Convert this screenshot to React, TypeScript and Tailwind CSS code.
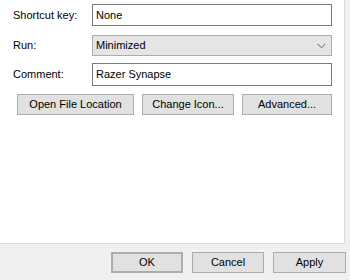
const font = "font-['Liberation_Sans',Arial,sans-serif] text-[11px] text-black";

function Field({ label, children, className }: { label: string; children: React.ReactNode; className?: string }) {
  return (
    <div className={"flex items-center " + (className ?? "")}>
      <span className="w-[92px] shrink-0 whitespace-nowrap pl-[13px] leading-none">{label}</span>
      {children}
    </div>
  );
}

function Btn({ children, className }: { children: React.ReactNode; className?: string }) {
  return (
    <button
      className={
        "flex h-[21px] shrink-0 items-center justify-center whitespace-nowrap border border-[#adadad] bg-[#e1e1e1] leading-none " +
        (className ?? "")
      }
    >
      {children}
    </button>
  );
}

export default function App() {
  return (
    <div className={"flex h-[280px] w-[350px] flex-col bg-[#f0f0f0] " + font}>
      <div className="h-[244px] w-[345px] border-b border-r border-[#dadada] bg-white pt-[4px]">
        <Field label="Shortcut key:">
          <div className="flex h-[22px] w-[240px] shrink-0 items-center border border-[#7a7a7a] pl-[3px]">None</div>
        </Field>
        <Field label="Run:" className="mt-[9px]">
          <div className="flex h-[21px] w-[240px] shrink-0 items-center justify-between border border-[#adadad] bg-[#e5e5e5] pl-[3px] pr-[5px]">
            <span>Minimized</span>
            <svg width="9" height="6" viewBox="0 0 9 6" fill="none" stroke="#606060" strokeWidth="1">
              <path d="M0.5 0.8 L4.5 4.8 L8.5 0.8" />
            </svg>
          </div>
        </Field>
        <Field label="Comment:" className="mt-[7px]">
          <div className="flex h-[23px] w-[240px] shrink-0 items-center border border-[#7a7a7a] pl-[3px]">Razer Synapse</div>
        </Field>
        <div className="mt-[8px] flex gap-[8px] pl-[17px]">
          <Btn className="w-[117px]">Open File Location</Btn>
          <Btn className="w-[92px]">Change Icon...</Btn>
          <Btn className="w-[90px]">Advanced...</Btn>
        </div>
      </div>
      <div className="flex justify-end gap-[9px] pr-[4px] pt-[8px]">
        <Btn className="w-[72px] border-2 border-[#0078d7]">OK</Btn>
        <Btn className="w-[72px]">Cancel</Btn>
        <Btn className="w-[73px]">Apply</Btn>
      </div>
    </div>
  );
}
